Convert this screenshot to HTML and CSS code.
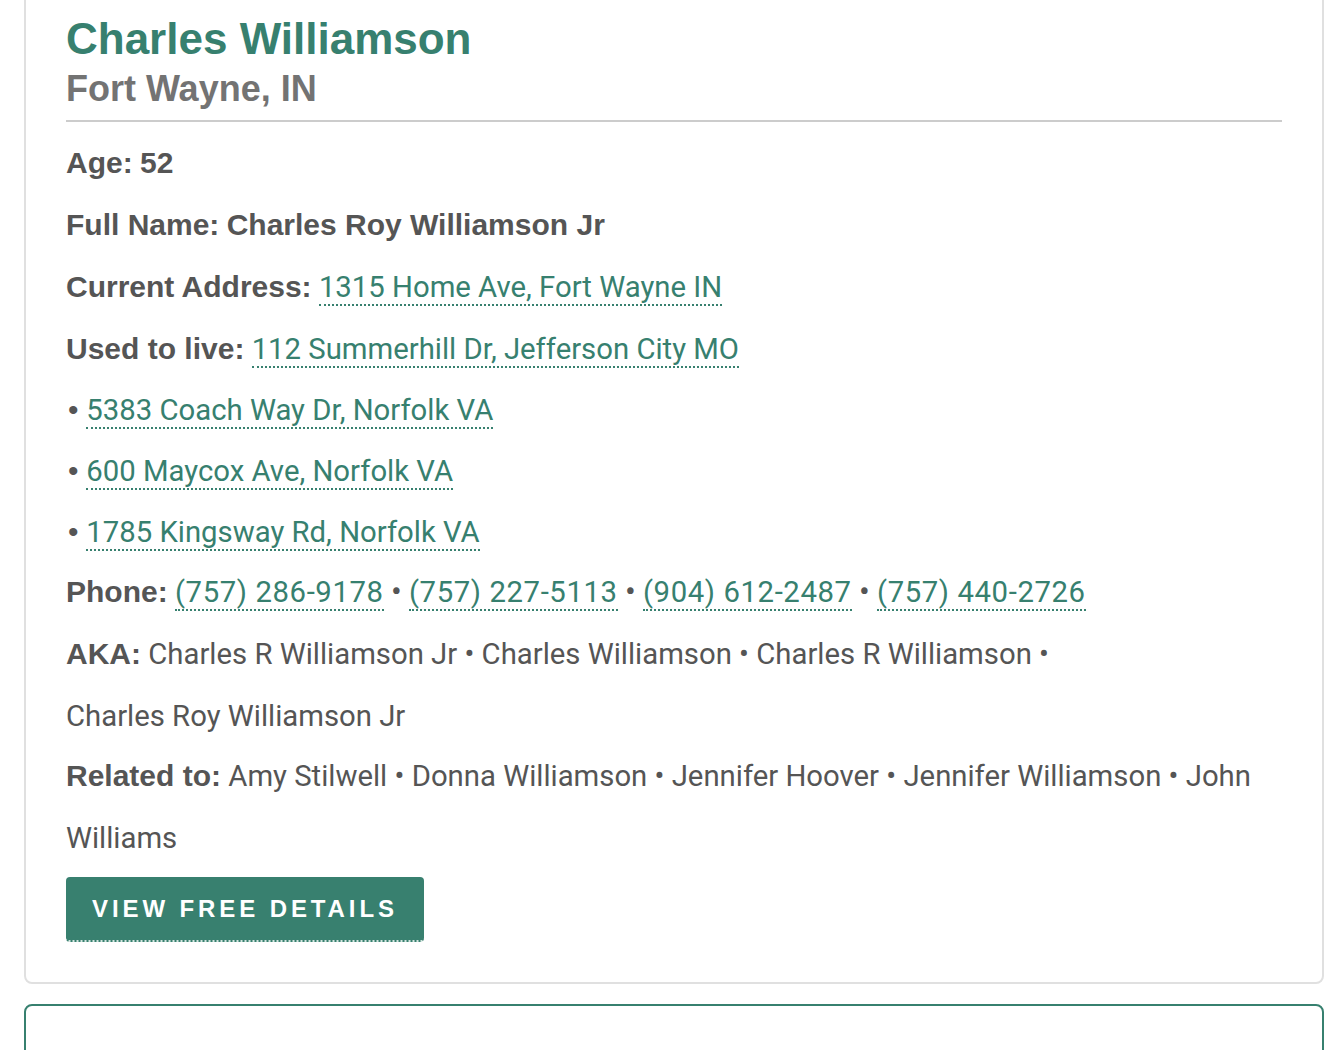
FILE: index.html
```html
<!DOCTYPE html>
<html lang="en">
<head>
<meta charset="utf-8">
<title>Charles Williamson - Fort Wayne, IN</title>
<link rel="stylesheet" href="styles.css">
</head>
<body>
<div class="page">
  <section class="card">
    <h1 class="name">Charles Williamson</h1>
    <h2 class="city">Fort Wayne, IN</h2>
    <hr class="rule">
    <p class="row"><b>Age:</b> <b>52</b></p>
    <p class="row"><b>Full Name:</b> <b>Charles Roy Williamson Jr</b></p>
    <p class="row"><b>Current Address:</b> <a href="#" class="link">1315 Home Ave, Fort Wayne IN</a></p>
    <p class="row"><b>Used to live:</b> <a href="#" class="link">112 Summerhill Dr, Jefferson City MO</a></p>
    <ul class="past">
      <li><span class="dot">•</span> <a href="#" class="link">5383 Coach Way Dr, Norfolk VA</a></li>
      <li><span class="dot">•</span> <a href="#" class="link">600 Maycox Ave, Norfolk VA</a></li>
      <li><span class="dot">•</span> <a href="#" class="link">1785 Kingsway Rd, Norfolk VA</a></li>
    </ul>
    <p class="row row-phone"><b>Phone:</b> <a href="#" class="link phone">(757) 286-9178</a> <span class="sep">•</span> <a href="#" class="link phone">(757) 227-5113</a> <span class="sep">•</span> <a href="#" class="link phone">(904) 612-2487</a> <span class="sep">•</span> <a href="#" class="link phone">(757) 440-2726</a></p>
    <p class="row"><b>AKA:</b> Charles R Williamson Jr • Charles Williamson • Charles R Williamson • <span class="nw">Charles Roy Williamson Jr</span></p>
    <p class="row row-related"><b>Related to:</b> Amy Stilwell • Donna Williamson • Jennifer Hoover • Jennifer Williamson • John Williams</p>
    <a href="#" class="btn">VIEW FREE DETAILS</a>
  </section>
  <section class="card card-next"></section>
</div>
</body>
</html>
```
FILE: styles.css
```css
html, body {
  margin: 0;
  padding: 0;
  background: #ffffff;
}

.page {
  padding: 0 12px 0 24px;
  overflow: hidden;
  height: 1050px;
}

.card {
  box-sizing: border-box;
  width: 1300px;
  border: 2px solid #e0e0e0;
  border-radius: 8px;
  padding: 42px 40px 40px 40px;
  margin-top: -30px;
  color: #555555;
  font-family: "Liberation Sans", Arial, sans-serif;
}

.card-next {
  margin-top: 20px;
  height: 200px;
  border-color: #37806f;
  padding: 0;
}

.name {
  margin: 0;
  font-size: 44px;
  line-height: 50px;
  font-weight: bold;
  color: #37806f;
}

.city {
  margin: 5px 0 0;
  font-size: 36px;
  line-height: 40px;
  font-weight: bold;
  color: #737373;
}

.rule {
  margin: 11px 0 0;
  border: 0;
  height: 2px;
  background: #cccccc;
}

.row {
  margin: 0;
  font-family: Roboto, "Liberation Sans", sans-serif;
  font-size: 29.3px;
  line-height: 62px;
  color: #555555;
}

.rule + .row {
  margin-top: 10px;
}

.row-phone,
.row-related {
  margin-top: -2px;
}

.row b {
  font-family: "Liberation Sans", Arial, sans-serif;
  font-size: 30px;
  font-weight: bold;
  line-height: 30px;
}

.link,
.sep {
  font-family: Roboto, "Liberation Sans", sans-serif;
  font-size: 29.3px;
  font-weight: normal;
  line-height: 30px;
}

.nw {
  white-space: nowrap;
}

.link {
  color: #37806f;
  text-decoration: none;
  border-bottom: 2px dotted #37806f;
}

.phone {
  letter-spacing: 0.6px;
}

.sep {
  font-size: 32px;
  color: #555555;
}

.dot {
  font-family: "Liberation Sans", Arial, sans-serif;
  font-size: 30px;
  color: #555555;
}

.past {
  list-style: none;
  margin: 0;
  padding: 0 0 0 2px;
  font-size: 28px;
  line-height: 60px;
}

.btn {
  display: inline-block;
  margin-top: 8px;
  height: 65px;
  box-sizing: border-box;
  padding: 0 26px 0 26px;
  line-height: 64px;
  background: #38806f;
  color: #ffffff;
  font-family: "Liberation Sans", Arial, sans-serif;
  font-weight: bold;
  font-size: 24px;
  letter-spacing: 3.9px;
  text-decoration: none;
  border-radius: 4px;
  border-bottom: 2px dotted #d4e6e0;
}
```
